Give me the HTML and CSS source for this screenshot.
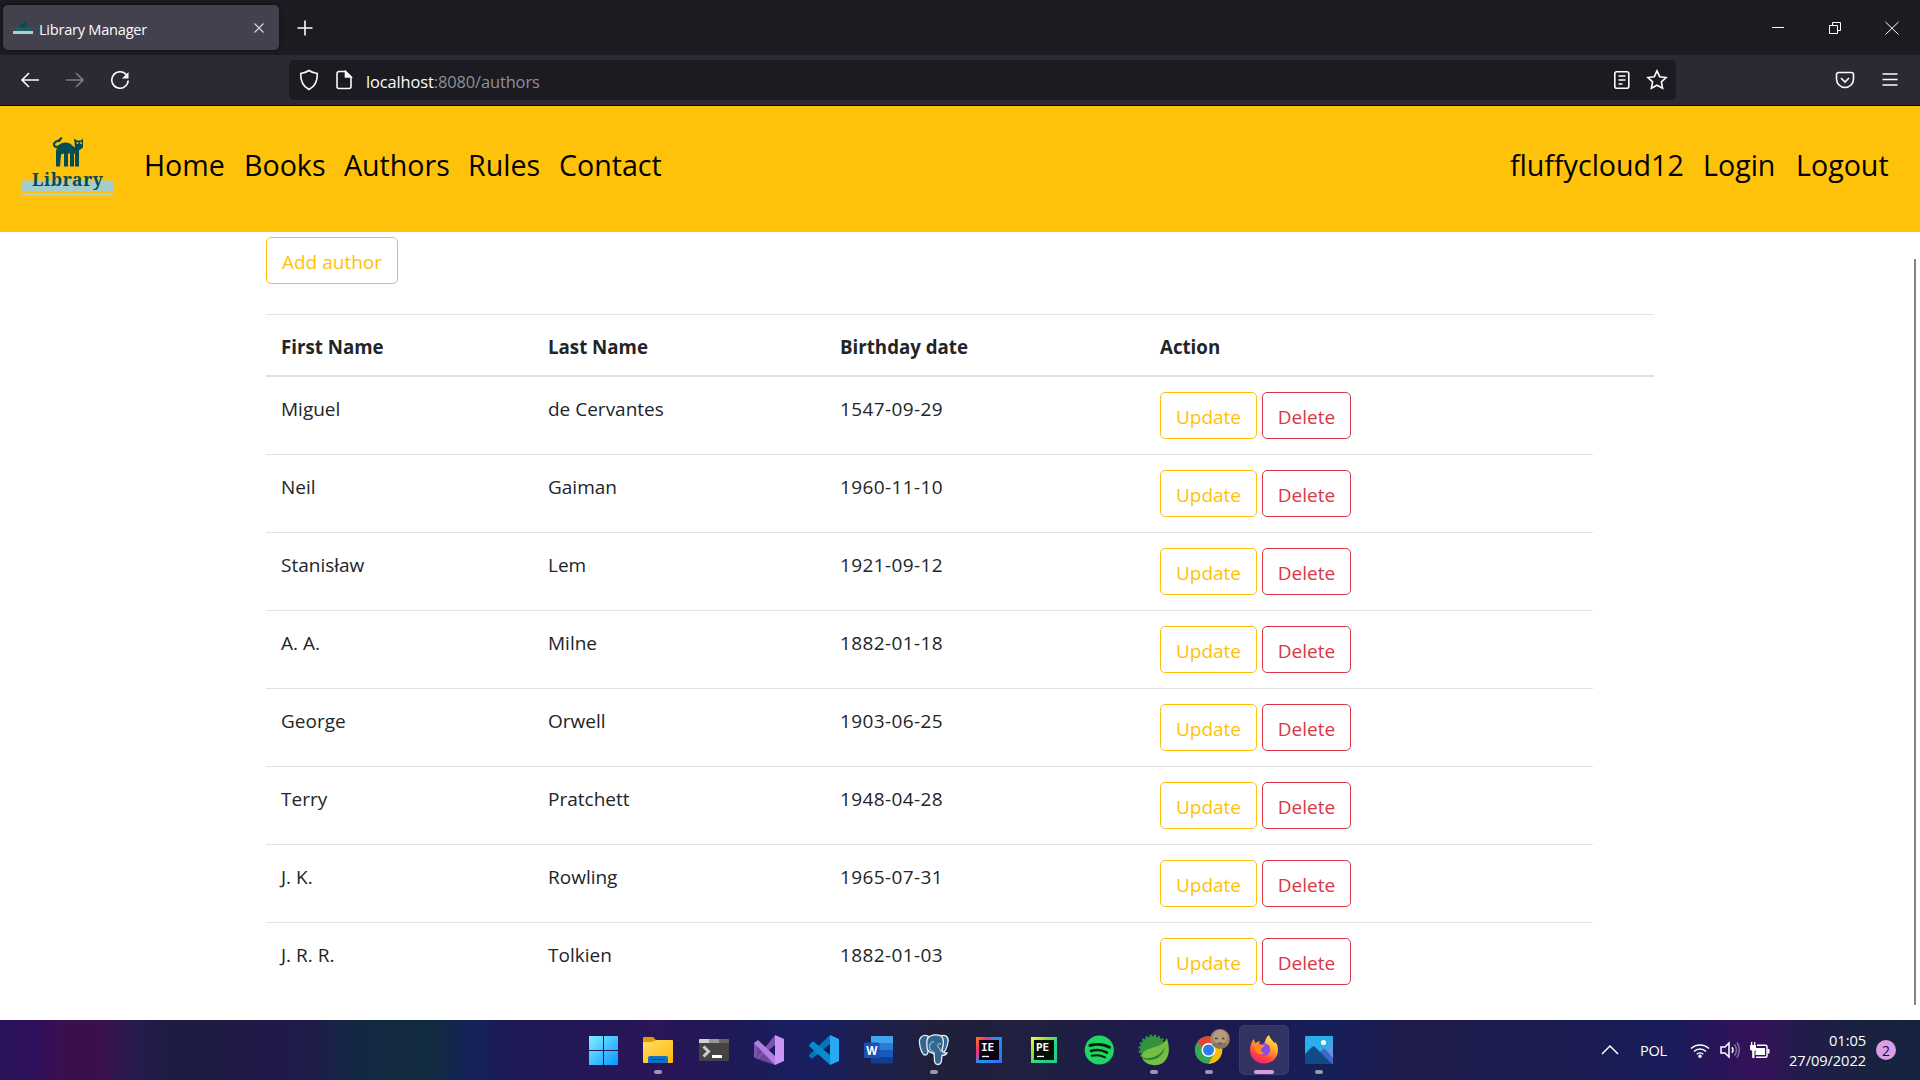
FILE: index.html
```html
<!DOCTYPE html>
<html lang="en">
<head>
<meta charset="utf-8">
<title>Library Manager</title>
<link rel="stylesheet" href="styles.css">
</head>
<body>
<header class="tabbar">
  <div class="tab">
    <svg class="favicon" viewBox="0 0 20 14"><path d="M7 1h1v2h3V1h2v3h-1v3H7z" fill="#0a4a55"/><path d="M2 7h16v3H2z" fill="#1c5c62"/><path d="M0 10h20v3H0z" fill="#a5d3d2"/></svg>
    <span class="tab-title">Library Manager</span>
    <svg class="tab-close" viewBox="0 0 12 12"><path d="M1.5 1.5l9 9m0-9l-9 9"/></svg>
  </div>
  <svg class="newtab" viewBox="0 0 16 16"><path d="M8 .5v15M.5 8h15"/></svg>
  <div class="window-controls">
    <svg viewBox="0 0 14 14"><path d="M1 6.500h12"/></svg>
    <svg viewBox="0 0 14 14"><path d="M1.500 4.500h8v8h-8zM4.500 4.500v-3h8v8h-3"/></svg>
    <svg viewBox="0 0 14 14"><path d="M.5 1l13 12.500m0-12.500L.5 13.500"/></svg>
  </div>
</header>
<div class="toolbar">
  <div class="history">
    <svg viewBox="0 0 20 20"><path d="M9 3L2 10l7 7M2 10h17"/></svg>
    <svg class="disabled" viewBox="0 0 20 20"><path d="M11 3l7 7-7 7M18 10H1"/></svg>
    <svg viewBox="0 0 20 20"><path d="M16.500 5A8.200 8.200 0 1 0 18.200 10.500"/><path d="M18.500 2v6.500H12z" fill="#fbfbfe" stroke="none"/></svg>
  </div>
  <div class="urlbar">
    <svg class="shield" viewBox="0 0 20 22"><path d="M10 1.500c2.500 1.800 5 2.600 8.300 3 .2 6.500-1.500 12.500-8.300 16C3.200 17 1.500 11 1.700 4.500 5 4.100 7.500 3.300 10 1.500z"/></svg>
    <svg class="page" viewBox="0 0 18 20"><path d="M10.500 1.500H4a2 2 0 0 0-2 2v13a2 2 0 0 0 2 2h10a2 2 0 0 0 2-2V7z"/><path d="M10.500 1.500V7H16z" fill="#fbfbfe"/></svg>
    <span class="url">localhost<span class="path">:8080/authors</span></span>
    <svg class="reader" viewBox="0 0 18 20"><rect x="1.800" y="1.800" width="14" height="16.400" rx="2"/><path d="M5.500 6h7M5.500 10h7M5.500 14h4" stroke-width="1.400"/></svg>
    <svg class="star" viewBox="0 0 22 22"><path d="M11 1.800l2.700 5.900 6.400.8-4.700 4.400 1.200 6.400L11 16.200l-5.600 3.100 1.200-6.400L1.900 8.500l6.400-.8z"/></svg>
  </div>
  <div class="tools">
    <svg viewBox="0 0 20 20"><path d="M3.500 2.500h13a2 2 0 0 1 2 2V9a8.500 8.500 0 0 1-17 0V4.500a2 2 0 0 1 2-2z"/><path d="M6 8l4 4 4-4"/></svg>
    <svg viewBox="0 0 20 20"><path d="M2.500 4h15M2.500 9.500h15M2.500 15h15"/></svg>
  </div>
</div>
<nav class="navbar">
  <svg class="logo" viewBox="0 0 94 62">
    <path d="M1 44.500h91v11H1z" fill="#a5cdcb"/><path d="M1 58.500h91" stroke="#b5d6c0" stroke-width="1.600"/>
    <g transform="translate(-1 -1.500)">
      <path d="M39 7.500c0-3 3-3 2-4.500M41.500 3c-1 4-7 3-7.500 6.500s4 3.500 6 1.500" fill="none" stroke="#044d55" stroke-width="2.200"/>
      <path d="M36 32V18c0-5 3-10 10-10 4 0 6 3 9 5l-1-9 3 2h4l2-2v9l-4 3v16h-4V19h-1v13h-4V19h-2v13h-4V19l-3 1-1 12z" fill="#044d55"/>
      <path d="M56.500 8.500h2M60 8.500h2" stroke="#fec20b" stroke-width="1.500"/>
    </g>
    <text x="11" y="49.500" textLength="71" lengthAdjust="spacing" class="logo-text">Library</text>
  </svg>
  <div class="nav-left"><a>Home</a><a>Books</a><a>Authors</a><a>Rules</a><a>Contact</a></div>
  <div class="nav-right"><a>fluffycloud12</a><a>Login</a><a>Logout</a></div>
</nav>
<div class="scrollbar"></div>
<main class="content">
  <a class="btn add">Add author</a>
  <table class="authors">
    <colgroup><col class="c1"><col class="c2"><col class="c3"><col class="c4"><col class="c5"></colgroup>
    <thead><tr><th>First Name</th><th>Last Name</th><th>Birthday date</th><th>Action</th><th></th></tr></thead>
    <tbody>
      <tr><td>Miguel</td><td>de Cervantes</td><td class="date">1547-09-29</td><td><div class="actions"><a class="btn update">Update</a><a class="btn delete">Delete</a></div></td></tr>
      <tr><td>Neil</td><td>Gaiman</td><td class="date">1960-11-10</td><td><div class="actions"><a class="btn update">Update</a><a class="btn delete">Delete</a></div></td></tr>
      <tr><td>Stanisław</td><td>Lem</td><td class="date">1921-09-12</td><td><div class="actions"><a class="btn update">Update</a><a class="btn delete">Delete</a></div></td></tr>
      <tr><td>A. A.</td><td>Milne</td><td class="date">1882-01-18</td><td><div class="actions"><a class="btn update">Update</a><a class="btn delete">Delete</a></div></td></tr>
      <tr><td>George</td><td>Orwell</td><td class="date">1903-06-25</td><td><div class="actions"><a class="btn update">Update</a><a class="btn delete">Delete</a></div></td></tr>
      <tr><td>Terry</td><td>Pratchett</td><td class="date">1948-04-28</td><td><div class="actions"><a class="btn update">Update</a><a class="btn delete">Delete</a></div></td></tr>
      <tr><td>J. K.</td><td>Rowling</td><td class="date">1965-07-31</td><td><div class="actions"><a class="btn update">Update</a><a class="btn delete">Delete</a></div></td></tr>
      <tr><td>J. R. R.</td><td>Tolkien</td><td class="date">1882-01-03</td><td><div class="actions"><a class="btn update">Update</a><a class="btn delete">Delete</a></div></td></tr>
    </tbody>
  </table>
</main>
<footer class="taskbar">
  <div class="apps">
    <svg viewBox="0 0 55 60"><defs><linearGradient id="win" x1="13" y1="16" x2="42" y2="45" gradientUnits="userSpaceOnUse"><stop offset="0" stop-color="#7df2ff"/><stop offset="1" stop-color="#0a93ff"/></linearGradient></defs><path d="M13 16h14v14H13zM28 16h14v14H28zM13 31h14v14H13zM28 31h14v14H28z" fill="url(#win)"/></svg>
    <svg viewBox="0 0 55 60"><defs><linearGradient id="fold" x1="0" y1="0" x2="1" y2="1"><stop offset="0" stop-color="#ffdc66"/><stop offset="1" stop-color="#fdb90b"/></linearGradient></defs><path d="M12 18q0-1 1-1h9l3 3-2 4H12z" fill="#e09b05"/><path d="M12 22h9l4-2h16q1 0 1 1v21q0 1-1 1H13q-1 0-1-1z" fill="url(#fold)"/><path d="M17 43v-5q0-2 2-2h16q2 0 2 2v5z" fill="#0c73c4"/><path d="M20.500 39.500h13" stroke="#07457f"/><rect class="dot" x="23" y="50" width="8" height="4" rx="2"/></svg>
    <svg viewBox="0 0 55 60"><rect x="13" y="19" width="30" height="22" rx="1" fill="#444"/><path d="M13 23v-3q0-1 1-1h9v4z" fill="#d0d0d0"/><path d="M23 19h10v4H23z" fill="#999"/><path d="M33 19h9q1 0 1 1v3H33z" fill="#666"/><path d="M17.500 26.500l5 5-5 5" fill="none" stroke="#ccc" stroke-width="3"/><path d="M26 36.500h10" stroke="#fff" stroke-width="3"/></svg>
    <svg viewBox="0 0 55 60"><path d="M13 23l4-2 17 15v9L16 39l-3-2z" fill="#6b479a"/><path d="M13 23l3-1v16l-3-1zM16 38l18-23v10L18 38z" fill="#7d55b0"/><path d="M13 23l4-3 19 18-2 7z" fill="#b07fe4"/><path d="M34 15l9 4v22l-9 4z" fill="#cb95f8"/></svg>
    <svg viewBox="0 0 55 60"><path d="M13 35l21-20v9L17 38q-1 1-2 0l-2-2z" fill="#0875b8"/><path d="M13 25l3-3q1-1 2 0l16 13v10L13 26z" fill="#068bd0"/><path d="M34 15l9 4v22l-9 4z" fill="#29a9f4"/></svg>
    <svg viewBox="0 0 55 60"><path d="M20 16h22v7H20z" fill="#41a5ee"/><path d="M20 23h22v7H20z" fill="#2b7cd3"/><path d="M20 30h22v7H20z" fill="#185abd"/><path d="M20 37h22v6.500H20z" fill="#103f91"/><rect x="13" y="22.500" width="15.500" height="15.500" rx="1.500" fill="#1850b5"/><text x="20.700" y="34.500" text-anchor="middle" class="word">W</text></svg>
    <svg viewBox="0 0 55 60"><g fill="#336791" stroke="#e8eef3" stroke-width="1.300"><path d="M22 16c-6-2-9 2-8.500 7 .5 6 3 12 5.500 12s3-3 3-4z"/><path d="M35 16c4-2 8 1 7 6-1 6-3 10-6 12z"/><path d="M22 18c3-4 12-4 14-1 3 4 1 9 0 13 0 3 3 3 5 3-1 2-3 2.500-5 2.500-1 3 1 9-4 9-5 0-3-6-4-11-5-1-7-3-7-6 0-4-1-7 1-9.500z"/><path d="M28 22c-4-1-5 4-4 7s5 1 4 6M35 24c-3-1-4 1-3 3s3 2 3 5" fill="none" stroke-width=".8"/></g><rect class="dot" x="24" y="50" width="8" height="4" rx="2"/></svg>
    <svg viewBox="0 0 55 60"><defs><linearGradient id="ie" x1="0" y1="0" x2="1" y2=".7"><stop offset="0" stop-color="#f9810e"/><stop offset=".3" stop-color="#f52c83"/><stop offset=".55" stop-color="#149cf4"/><stop offset="1" stop-color="#3b6cf5"/></linearGradient></defs><path d="M15 17h26v26H15z" fill="url(#ie)"/><path d="M18 20h20v20H18z" fill="#0a0010"/><text x="20" y="30.500" class="jet">IE</text><path d="M21 36.500h7" stroke="#fff" stroke-width="1.300"/></svg>
    <svg viewBox="0 0 55 60"><defs><linearGradient id="pe" x1="0" y1="0" x2="1" y2="1"><stop offset="0" stop-color="#fcf84a"/><stop offset=".3" stop-color="#a2e22c"/><stop offset=".6" stop-color="#21d789"/><stop offset="1" stop-color="#25c58f"/></linearGradient></defs><path d="M15 17h26v26H15z" fill="url(#pe)"/><path d="M18 20h20v20H18z" fill="#001005"/><text x="20" y="30.500" class="jet">PE</text><path d="M21 36.500h7" stroke="#fff" stroke-width="1.300"/></svg>
    <svg viewBox="0 0 55 60"><circle cx="28.300" cy="30" r="14.600" fill="#1ed760"/><g fill="none" stroke="#111b15" stroke-linecap="round"><path d="M19 25.500c6-2 14-1.200 19.500 1.800" stroke-width="3"/><path d="M20 31c5-1.500 11.500-.8 16 1.700" stroke-width="2.500"/><path d="M20.800 35.800c4.500-1.200 9.500-.5 13.200 1.500" stroke-width="2"/></g></svg>
    <svg viewBox="0 0 55 60"><circle cx="27" cy="29" r="12.800" fill="#33923d"/><circle cx="27" cy="29" r="13.300" fill="none" stroke="#33923d" stroke-width="2.400" stroke-dasharray="2.200 2"/><path d="M41 18c2 8 4 17-3 24-6 5-16 4-21-2l-1-5c4-10 20-5 25-17z" fill="#75be43"/><path d="M17 38c11 1 18-3 22-11-2 10-11 15-22 12z" fill="#237d35"/><rect class="dot" x="24" y="50" width="8" height="4" rx="2"/></svg>
    <svg viewBox="0 0 55 60"><circle cx="27.500" cy="30" r="13.700" fill="#34a853"/><path d="M27.500 30L15.600 23.200A13.700 13.700 0 0 1 39.400 23.200z" fill="#ea4335"/><path d="M27.500 23.500h12.200A13.700 13.700 0 0 1 27.500 43.700l6-10.500z" fill="#fbbc05"/><circle cx="27.500" cy="30" r="7" fill="#fff"/><circle cx="27.500" cy="30" r="5.500" fill="#2f7de9"/><circle cx="39" cy="19" r="9.900" fill="#a08468"/><circle cx="39" cy="17" r="7" fill="#b79c80"/><path d="M31 24q8-3 16 0-2 4.500-8 4.500T31 24z" fill="#8c735e"/><path d="M34 18.500h2.500M41 18.500h2.500" stroke="#4a3a2e" stroke-width="1.300"/><path d="M37.500 23.500q1.500-1.500 3 0" fill="none" stroke="#59432f"/><rect class="dot" x="24" y="50" width="8" height="4" rx="2"/></svg>
    <svg viewBox="0 0 55 60"><defs><linearGradient id="fx" x1=".8" y1="0" x2=".3" y2="1"><stop offset="0" stop-color="#fff14a"/><stop offset=".45" stop-color="#ff9a2c"/><stop offset=".75" stop-color="#ff4245"/><stop offset="1" stop-color="#f0207a"/></linearGradient></defs><rect x="3.500" y="5.500" width="49" height="49" rx="5" fill="#fff" fill-opacity=".1" stroke="#fff" stroke-opacity=".1"/><path d="M14 30c0-5 2-9 4-11l1 4 5-2-1 3 5 1c1-4 2-8 5-10 1 4 4 5 5 8l1-1c3 3 3 6 3 8 0 8-6 13.500-14 13.500S14 38 14 30z" fill="url(#fx)"/><circle cx="28" cy="29.500" r="6.200" fill="#8a4be5"/><path d="M18 25c3-2 5-1 7 0h4c-1 3-4 2-4 5 0 2 2 3 4 2-3 5-11 2-11-7z" fill="#ff8a22"/><rect x="18" y="50" width="20" height="4" rx="2" fill="#dc9de0"/></svg>
    <svg viewBox="0 0 55 60"><defs><linearGradient id="ph" x1="0" y1="0" x2="1" y2="1"><stop offset=".5" stop-color="#28afea"/><stop offset="1" stop-color="#a57bd8"/></linearGradient></defs><rect x="14" y="16" width="28" height="28" rx="1" fill="url(#ph)"/><path d="M27 34l5-5q1-1 2 0l8 9v6H27z" fill="#3e67c8"/><path d="M14 34l7-7q1.500-1.500 3 0l17 17H15q-1 0-1-1z" fill="#124a86"/><circle cx="32.500" cy="22.500" r="2.600" fill="#f4f8fb"/><rect class="dot" x="24" y="50" width="8" height="4" rx="2"/></svg>
  </div>
  <div class="tray">
    <svg class="chevron" viewBox="0 0 18 12"><path d="M1 10l8-8 8 8"/></svg>
    <span class="lang">POL</span>
    <svg class="wifi" viewBox="0 0 20 17"><path d="M1 6.500a13 13 0 0 1 18 0M4 9.500a8.700 8.700 0 0 1 12 0M6.800 12.300a4.600 4.600 0 0 1 6.400 0"/><circle cx="10" cy="14.300" r="1.700" fill="#fff" stroke="none"/></svg>
    <svg class="volume" viewBox="0 0 20 18"><path d="M1 6h4l4-4v14l-4-4H1z"/><path d="M12 6.300q2 2.700 0 5.400"/><path d="M14.500 3.500q4 5.500 0 11M17 1.500q4.500 7.500 0 15" opacity=".4"/></svg>
    <svg class="battery" viewBox="0 0 20 17"><path d="M7 3.200h8.500q1.500 0 1.500 1.500v9q0 1.500-1.500 1.500H6"/><path d="M6 6h9v7H5.500V9zM17.500 7h2v4.500h-2zM0 3h6v4.500L4.500 9v7H2.200V9L0 7.500zM1 0h1.300v3H1zM4 0h1.300v3H4z" fill="#fff" stroke="none"/></svg>
    <div class="clock"><span>01:05</span><span>27/09/2022</span></div>
    <span class="badge">2</span>
  </div>
</footer>
</body>
</html>
```
FILE: styles.css
```css
* { box-sizing: border-box; }
body {
  margin: 0;
  width: 1920px;
  height: 1080px;
  overflow: hidden;
  display: flex;
  flex-direction: column;
  position: relative;
  background: #fff;
  color: #212529;
  font-family: "Open Sans", "Noto Sans", sans-serif;
}
svg { display: block; flex: none; }
.tabbar svg, .toolbar svg { fill: none; stroke: #fbfbfe; stroke-width: 1.6; }

.tabbar { height: 55px; flex: none; display: flex; align-items: center; padding-left: 3px; background: #1c1b22; }
.tab {
  width: 276px;
  height: 45px;
  display: flex;
  align-items: center;
  padding: 0 14px 0 10px;
  border-radius: 5px;
  background: #42414d;
  box-shadow: 0 0 4px rgba(0, 0, 0, .5);
}
.tabbar .favicon { width: 20px; height: 14px; stroke: none; }
.tab-title { margin-left: 6px; padding-top: 2px; font-size: 14.6px; letter-spacing: -.25px; color: #fbfbfe; }
.tabbar .tab-close { width: 12px; height: 12px; margin-left: auto; stroke-width: 1.2; stroke: #d5d4dc; }
.newtab { width: 16px; height: 16px; margin-left: 18px; }
.window-controls { display: flex; gap: 43px; margin-left: auto; padding-right: 21px; }
.tabbar .window-controls svg { width: 14px; height: 14px; stroke-width: 1; }

.toolbar { height: 51px; flex: none; display: flex; align-items: center; background: #2b2a33; border-bottom: 1px solid #0c0c0d; }
.history { width: 289px; display: flex; gap: 25px; padding-left: 20px; }
.history svg, .tools svg { width: 20px; height: 20px; }
.history .disabled { opacity: .4; }
.urlbar {
  width: 1387px;
  height: 40px;
  display: flex;
  align-items: center;
  padding: 0 8px 0 10px;
  border-radius: 5px;
  background: #1c1b22;
}
.urlbar .shield { width: 20px; height: 22px; }
.urlbar .page { width: 18px; height: 20px; margin-left: 16px; }
.url { margin-left: 13px; padding-top: 3px; font-size: 16.4px; letter-spacing: -.1px; color: #fbfbfe; }
.url .path { color: #8f8f98; }
.urlbar .reader { width: 18px; height: 20px; margin-left: auto; }
.urlbar .star { width: 22px; height: 22px; margin-left: 15px; }
.tools { display: flex; gap: 25px; margin-left: auto; padding-right: 20px; }

.navbar { height: 126px; flex: none; display: flex; padding-left: 21px; background: #ffc20a; }
.logo { width: 94px; height: 62px; margin-top: 30px; }
.logo-text { font: bold 17.5px "Noto Serif", "DejaVu Serif", serif; fill: #044d55; }
.nav-left, .nav-right { display: grid; height: 40px; margin-top: 39px; font-size: 28.6px; line-height: 40px; color: #000; white-space: nowrap; }
.nav-left { grid-template-columns: 100px 100px 124px 91px 104px; margin-left: 29px; }
.nav-right { grid-template-columns: 193px 93px 124px; margin-left: auto; }

.scrollbar { position: absolute; left: 1914px; top: 259px; width: 2px; height: 746px; background: #858585; }

.content { flex: 1; min-height: 0; display: flex; flex-direction: column; align-items: flex-start; padding: 5px 266px 0; font-size: 19px; line-height: 30px; }
.btn { height: 47px; display: flex; align-items: center; justify-content: center; padding-top: 2px; border: 1px solid #ffc107; border-radius: 5px; color: #ffc107; font-size: 19px; }
.add { width: 132px; }
.update { width: 97px; }
.delete { width: 89px; border-color: #dc3545; color: #dc3545; }
.actions { display: flex; gap: 5px; margin-top: -2px; }
.authors { width: 1388px; margin-top: 30px; table-layout: fixed; border-collapse: separate; border-spacing: 0; }
.authors th { height: 63px; padding: 17px 15px 13px; border-top: 1px solid #dee2e6; border-bottom: 2px solid #dee2e6; font-size: 18.7px; text-align: left; }
.authors td { height: 78px; padding: 17px 15px 15px; border-top: 1px solid #dee2e6; vertical-align: top; }
.authors tbody tr:first-child td { height: 77px; border-top: 0; }
.authors .date { letter-spacing: .38px; }
.c1 { width: 267px; }
.c2 { width: 292px; }
.c3 { width: 320px; }
.c4 { width: 448px; }
.c5 { width: 61px; }

.taskbar {
  height: 60px;
  flex: none;
  display: flex;
  justify-content: space-between;
  padding-left: 576px;
  color: #fff;
  background: linear-gradient(90deg, #27135a 0, #30105c 35px, #3b0f4e 65px, #3b0f4e 100px, #261a4e 135px, #1e1c42 170px, #1e1b43 220px, #211849 270px, #1e1c4a 310px, #142743 350px, #122b3f 430px, #14225a 470px, #1e1a56 510px, #2a1558 660px, #201956 720px, #171f60 815px, #1e1f4a 880px, #20203a 940px, #1f1f42 1050px, #1e1c4e 1150px, #1c1b50 1250px, #161f5a 1330px, #1e1c4c 1400px, #1b1b4e 1550px, #181d5a 1670px, #2c1459 1725px, #35125a 1760px, #221b4b 1800px, #19223f 1860px, #16233f 1920px);
}
.apps { display: flex; }
.apps svg { width: 55px; height: 60px; }
.dot { fill: #9a98ad; }
.word { font: bold 11.5px "Open Sans", sans-serif; fill: #fff; }
.jet { font: bold 11px "DejaVu Sans Mono", monospace; fill: #fff; }
.tray { display: flex; align-items: center; padding-right: 24px; }
.tray svg { fill: none; stroke: #fff; stroke-width: 1.5; }
.chevron { width: 18px; height: 12px; }
.lang { width: 27px; margin-left: 21px; font-size: 14.6px; letter-spacing: -.3px; }
.wifi { width: 20px; height: 17px; margin-left: 23px; }
.volume { width: 20px; height: 18px; margin-left: 10px; }
.battery { width: 20px; height: 17px; margin-left: 10px; }
.clock { width: 96px; display: flex; flex-direction: column; align-items: flex-end; font-size: 14.7px; line-height: 20px; letter-spacing: -.1px; }
.badge { width: 20px; height: 20px; margin-left: 10px; border-radius: 50%; background: #dc9de6; color: #1a1030; font-size: 14px; line-height: 21px; text-align: center; }
```
